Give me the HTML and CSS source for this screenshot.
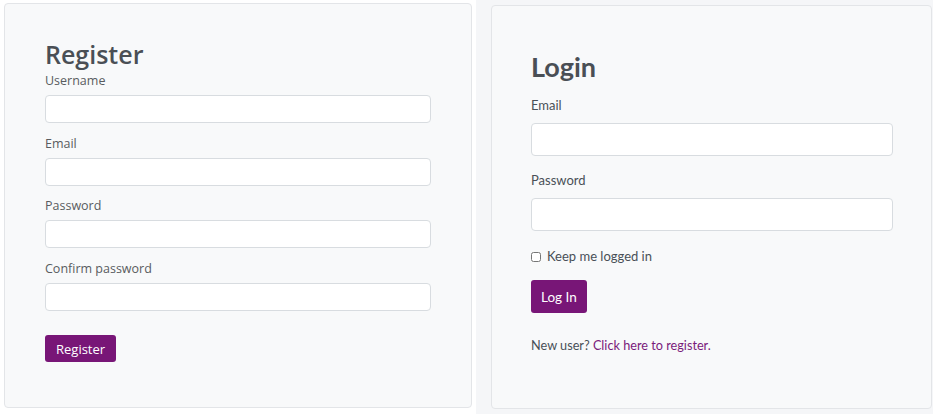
FILE: index.html
```html
<!DOCTYPE html>
<html>
<head>
<meta charset="utf-8">
<title>Register / Login</title>
<link rel="stylesheet" href="styles.css">
</head>
<body>
<div class="screens">
  <section class="pane pane-register">
    <div class="card card-register">
      <h2 class="title">Register</h2>
      <div class="group">
        <label class="label">Username</label>
        <input class="input" type="text">
      </div>
      <div class="group">
        <label class="label">Email</label>
        <input class="input" type="email">
      </div>
      <div class="group">
        <label class="label">Password</label>
        <input class="input" type="password">
      </div>
      <div class="group">
        <label class="label">Confirm password</label>
        <input class="input" type="password">
      </div>
      <button class="btn" type="button">Register</button>
    </div>
  </section>
  <section class="pane pane-login">
    <div class="card card-login">
      <h2 class="title">Login</h2>
      <div class="group">
        <label class="label">Email</label>
        <input class="input" type="email">
      </div>
      <div class="group">
        <label class="label">Password</label>
        <input class="input" type="password">
      </div>
      <label class="check">
        <input type="checkbox" class="check-box">
        <span>Keep me logged in</span>
      </label>
      <button class="btn" type="button">Log In</button>
      <p class="note">New user? <a class="link" href="#">Click here to register.</a></p>
    </div>
  </section>
</div>
</body>
</html>
```
FILE: styles.css
```css
* { box-sizing: border-box; }
html, body { margin: 0; padding: 0; background: #ffffff; }
body { width: 937px; height: 414px; overflow: hidden; }

.screens {
  display: flex;
  height: 414px;
}

.pane { height: 414px; }

.pane-register {
  width: 476px;
  padding: 3px 4px 0 4px;
  background: #ffffff;
}
.pane-login {
  width: 457px;
  padding: 5px 0 0 15px;
  background: #f5f6f8;
}

.card {
  background: #f8f9fa;
  border: 1px solid #e3e5e8;
  border-radius: 4px;
  display: flex;
  flex-direction: column;
  align-items: flex-start;
}

.input {
  display: block;
  width: 100%;
  background: #ffffff;
  border: 1px solid #d8dce0;
  border-radius: 4px;
  margin: 0;
  padding: 0;
}

.group { width: 100%; display: flex; flex-direction: column; }
.label { display: block; }
.title { margin: 0; color: #464b51; }

.btn {
  background: #781677;
  color: #ffffff;
  border: 0;
  border-radius: 3px;
  margin: 0;
}

/* Register (left) */
.card-register {
  height: 405px;
  padding: 36px 40px 0 40px;
  font-family: "Open Sans", "Noto Sans", sans-serif;
}
.card-register .title {
  font-size: 25px;
  font-weight: 600;
  line-height: 29px;
  margin-bottom: 3px;
  color: #4a4f55;
}
.card-register .label {
  font-size: 12.5px;
  line-height: 18px;
  color: #595c60;
  margin-bottom: 5px;
}
.card-register .input { height: 28px; }
.card-register .group { margin-bottom: 11.7px; }
.card-register .btn {
  margin-top: 12.5px;
  height: 27px;
  padding: 0 11px;
  font-family: "Open Sans", sans-serif;
  font-size: 13px;
}

/* Login (right) */
.card-login {
  width: 441px;
  height: 404px;
  padding: 44px 38px 0 39px;
  font-family: Lato, "Noto Sans", sans-serif;
}
.card-login .title {
  font-size: 27px;
  font-weight: 700;
  line-height: 34px;
  margin-bottom: 11px;
  color: #4a4f55;
}
.card-login .label {
  font-size: 13px;
  line-height: 21px;
  color: #495057;
  margin-bottom: 7px;
}
.card-login .input { height: 33px; }
.card-login .group { margin-bottom: 14px; }

.check {
  display: flex;
  align-items: center;
  gap: 6px;
  font-size: 13px;
  line-height: 21px;
  color: #495057;
  margin-top: 1px;
}
.check-box {
  width: 10px;
  height: 10px;
  margin: 0;
}

.card-login .btn {
  margin-top: 13px;
  height: 33px;
  padding: 0 10px;
  font-family: Lato, sans-serif;
  font-size: 13.5px;
}

.note {
  margin: 22px 0 0 0;
  font-size: 12.7px;
  line-height: 21px;
  color: #495057;
}
.link { color: #7a1b7a; text-decoration: none; }
```
